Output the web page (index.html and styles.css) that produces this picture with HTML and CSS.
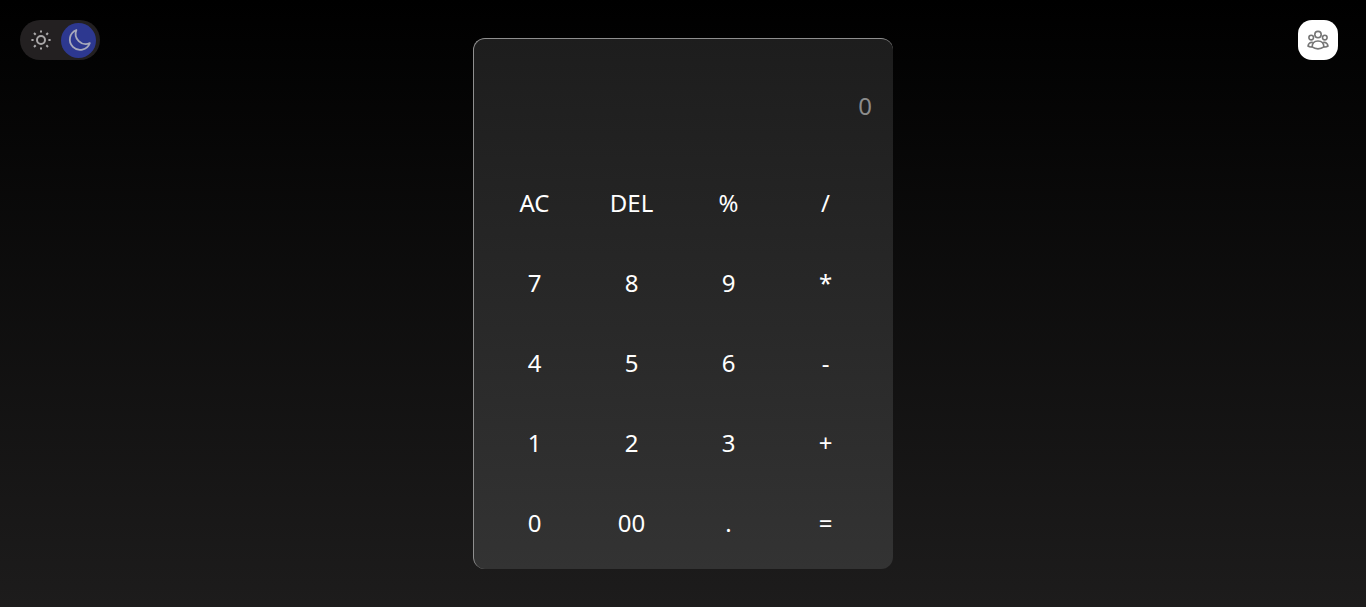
FILE: index.html
```html
<!DOCTYPE html>
<html lang="en">
<head>
<meta charset="utf-8">
<meta name="viewport" content="width=device-width, initial-scale=1">
<title>Calculator</title>
<link rel="stylesheet" href="styles.css">
</head>
<body>
<label class="theme">
  <input class="theme-input" type="checkbox" role="switch" aria-label="Dark mode" checked>
  <svg class="sun" viewBox="0 0 20 20" aria-hidden="true">
    <circle cx="10" cy="10" r="4"/>
    <path d="M10 .4v2.200M10 17.400v2.200M.4 10h2.200M17.400 10h2.200M3 3l1.700 1.700M15.300 15.300l1.700 1.700M3 17l1.700-1.700M15.300 4.700l1.700-1.700"/>
  </svg>
  <span class="knob">
    <svg class="moon" viewBox="0 0 24 24" aria-hidden="true">
      <path d="M9.400 2A10.300 10.300 0 1 0 22.800 15.200A10.200 10.200 0 0 1 9.400 2Z"/>
    </svg>
  </span>
</label>
<button class="team" type="button" aria-label="Team">
  <svg class="team-icon" viewBox="0 0 22 20" aria-hidden="true">
    <circle cx="11" cy="4.600" r="3.200"/>
    <circle cx="4.200" cy="7.600" r="2.300"/>
    <circle cx="17.800" cy="7.600" r="2.300"/>
    <path d="M5.100 16.900C5.200 13.300 7.600 11 11 11S16.800 13.300 16.900 16.900C13.500 19.500 8.500 19.500 5.100 16.900Z"/>
    <path d="M5.900 12.500C3.200 12 1.300 13.300 1 16C2.200 16.900 3.800 17.100 5.100 16.800M16.100 12.500C18.800 12 20.700 13.300 21 16C19.800 16.900 18.200 17.100 16.900 16.800"/>
  </svg>
</button>
<main class="page">
  <section class="calculator" aria-label="Calculator">
    <input class="display" type="text" placeholder="0" aria-label="Result" readonly>
    <div class="keys">
      <button class="key" type="button">AC</button>
      <button class="key" type="button">DEL</button>
      <button class="key" type="button">%</button>
      <button class="key" type="button">/</button>
      <button class="key" type="button">7</button>
      <button class="key" type="button">8</button>
      <button class="key" type="button">9</button>
      <button class="key" type="button">*</button>
      <button class="key" type="button">4</button>
      <button class="key" type="button">5</button>
      <button class="key" type="button">6</button>
      <button class="key" type="button">-</button>
      <button class="key" type="button">1</button>
      <button class="key" type="button">2</button>
      <button class="key" type="button">3</button>
      <button class="key" type="button">+</button>
      <button class="key" type="button">0</button>
      <button class="key" type="button">00</button>
      <button class="key" type="button">.</button>
      <button class="key" type="button">=</button>
    </div>
  </section>
</main>
</body>
</html>
```
FILE: styles.css
```css
* {
  box-sizing: border-box;
}

body {
  margin: 0;
  min-height: 100vh;
  background: linear-gradient(#000, #1d1c1c);
  color: #fff;
  font-family: "Segoe UI", "Noto Sans", sans-serif;
}

.page {
  display: flex;
  align-items: center;
  justify-content: center;
  min-height: 100vh;
}

.calculator {
  width: 100%;
  max-width: 420px;
  padding: 34px 19px 7px 12px;
  border-top: 1px solid #8f8f8f;
  border-left: 1px solid #8f8f8f;
  border-radius: 12px;
  background: linear-gradient(#1d1d1d, #333);
}

.display {
  display: block;
  width: 100%;
  height: 65px;
  margin-bottom: 24px;
  padding: 0 2px;
  border: 0;
  outline: 0;
  background: transparent;
  color: #fff;
  font-family: inherit;
  font-size: 24px;
  text-align: right;
}

.display::placeholder {
  color: #8c8c8c;
}

.keys {
  display: grid;
  grid-template-columns: repeat(4, 1fr);
  grid-auto-rows: 80px;
}

.key {
  padding: 0;
  border: 0;
  background: transparent;
  color: inherit;
  font-family: inherit;
  font-size: 24px;
  cursor: pointer;
}

.theme {
  position: absolute;
  top: 20px;
  left: 20px;
  display: flex;
  align-items: center;
  justify-content: space-between;
  width: 80px;
  height: 40px;
  padding: 0 4px 0 11px;
  border-radius: 20px;
  background: #232021;
  cursor: pointer;
}

.theme-input {
  position: absolute;
  inset: 0;
  width: 100%;
  height: 100%;
  margin: 0;
  opacity: 0;
  cursor: pointer;
}

.sun {
  width: 20px;
  height: 20px;
  fill: none;
  stroke: #a9a7a8;
  stroke-width: 2;
}

.knob {
  display: grid;
  place-items: center;
  width: 35px;
  height: 35px;
  border-radius: 50%;
  background: #2d3890;
}

.moon {
  width: 24px;
  height: 24px;
  fill: none;
  stroke: #a7a9bb;
  stroke-width: 1.8;
  stroke-linejoin: round;
}

.team {
  position: absolute;
  top: 20px;
  right: 28px;
  display: grid;
  place-items: center;
  width: 40px;
  height: 40px;
  padding: 0;
  border: 0;
  border-radius: 14px;
  background: #fff;
  cursor: pointer;
}

.team-icon {
  width: 22px;
  height: 20px;
  fill: none;
  stroke: #757575;
  stroke-width: 1.6;
  stroke-linejoin: round;
}
```
